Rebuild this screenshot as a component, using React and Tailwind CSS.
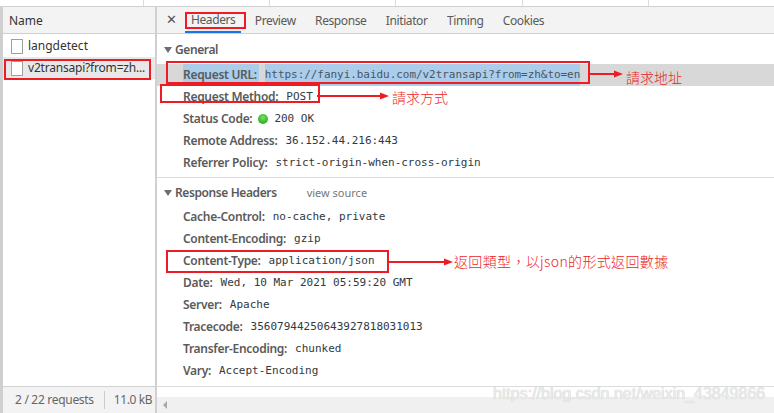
const sans = 'font-["Noto_Sans","Liberation_Sans",sans-serif]';
const mono = 'font-["DejaVu_Sans_Mono","Liberation_Mono",monospace]';
const cjk = 'font-["Noto_Sans_CJK_TC","Noto_Sans_CJK_SC",sans-serif]';

const general = [
  { name: 'Request Method:', value: 'POST' },
  { name: 'Status Code:', value: '200 OK', dot: true },
  { name: 'Remote Address:', value: '36.152.44.216:443' },
  { name: 'Referrer Policy:', value: 'strict-origin-when-cross-origin' },
];

const response = [
  { name: 'Cache-Control:', value: 'no-cache, private' },
  { name: 'Content-Encoding:', value: 'gzip' },
  { name: 'Content-Type:', value: 'application/json' },
  { name: 'Date:', value: 'Wed, 10 Mar 2021 05:59:20 GMT' },
  { name: 'Server:', value: 'Apache' },
  { name: 'Tracecode:', value: '35607944250643927818031013' },
  { name: 'Transfer-Encoding:', value: 'chunked' },
  { name: 'Vary:', value: 'Accept-Encoding' },
];

const tabs = ['Headers', 'Preview', 'Response', 'Initiator', 'Timing', 'Cookies'];

const Row = ({ name, value, dot }) => (
  <div className="flex h-[22px] items-center whitespace-nowrap pl-[26px]">
    <span className="text-[12px] font-semibold tracking-[-0.3px] text-[#5a5a5a]">{name}</span>
    {dot && <span className="ml-[6px] h-[10px] w-[10px] rounded-full bg-[radial-gradient(circle_at_50%_35%,#7be05c,#0f9d12)]" />}
    <span className={`${dot ? 'ml-[6px]' : 'ml-[8px]'} text-[11px] text-[#303942] ${mono}`}>{value}</span>
  </div>
);

const Section = ({ title, extra, className = 'h-[22px]' }) => (
  <div className={`flex items-center pl-[7px] ${className}`}>
    <span className="mr-[3px] h-0 w-0 border-x-[4px] border-t-[6px] border-x-transparent border-t-[#6e6e6e]" />
    <span className="text-[12px] font-semibold tracking-[-0.4px] text-[#5a5a5a]">{title}</span>
    {extra && <span className="ml-[30px] text-[11px] text-[#777]">{extra}</span>}
  </div>
);

const FileIcon = () => <span className="h-[15px] w-[12px] shrink-0 border border-[#a0a0a0] bg-white" />;

const Arrow = ({ className, width }) => (
  <svg className={`absolute ${className}`} width={width} height="10" viewBox={`0 0 ${width} 10`}>
    <path d={`M0 5H${width - 8}`} stroke="#ed1c24" strokeWidth="2" />
    <path d={`M${width - 9} 1.5L${width} 5L${width - 9} 8.5Z`} fill="#ed1c24" />
  </svg>
);

const Note = ({ className, children }) => (
  <span className={`absolute whitespace-nowrap text-[14px] font-light leading-none text-[#ed1c24] ${cjk} ${className}`}>{children}</span>
);

const Box = ({ className }) => <div className={`absolute border-2 border-[#ed1c24] ${className}`} />;

export default function App() {
  return (
    <div className={`relative flex h-[413px] w-[774px] flex-col overflow-hidden bg-white ${sans}`}>
      {/* waterfall header remains */}
      <div className="flex h-[7px] shrink-0 border-b border-[#d0d0d0] pl-[143px]">
        {[0, 1, 2, 3, 4].map((i) => (
          <div key={i} className="h-full w-[140px] border-l border-[#dcdcdc]" />
        ))}
      </div>

      <div className="flex min-h-0 flex-1">
        {/* request list */}
        <div className="flex w-[157px] shrink-0 flex-col border-x-[3px] border-l-[#cfcfcf] border-r-[#d0d0d0] [border-right-width:2px]">
          <div className="flex h-[27px] items-center border-b border-[#d0d0d0] bg-[#f3f3f3] pl-[6px] pt-[2px] text-[12px] text-[#333]">Name</div>
          <div className="mt-[1px] flex h-[22px] items-center gap-[5px] pl-[8px] text-[12px] text-[#333]">
            <FileIcon />
            langdetect
          </div>
          <div className="flex h-[22px] items-center gap-[5px] bg-[#e8e8e8] pl-[8px] text-[12px] text-[#333]">
            <FileIcon />
            <span className="w-[118px] truncate tracking-[-0.2px]">v2transapi?from=zh...</span>
          </div>
          <div className="flex-1" />
          <div className="flex h-[27px] items-center whitespace-nowrap border-t border-[#d0d0d0] bg-[#f3f3f3] pl-[12px] text-[12px] tracking-[-0.3px] text-[#666]">
            <span className="border-r border-[#ccc] pr-[10px]">2 / 22 requests</span>
            <span className="pl-[9px] tracking-[-0.4px]">11.0 kB</span>
          </div>
        </div>

        {/* details */}
        <div className="flex min-w-0 flex-1 flex-col">
          <div className="flex h-[27px] shrink-0 items-center border-b border-[#d0d0d0] bg-[#f3f3f3]">
            <span className="ml-[9px] w-[19px] text-[13px] text-[#555]">✕</span>
            {tabs.map((t, i) => (
              <span key={t} className={`mr-[7.4px] flex h-full items-center px-[6px] pt-[1px] text-[12px] tracking-[-0.4px] text-[#5a5a5a] ${i === 0 ? 'border-b-2 border-[#1a73e8]' : ''}`}>
                {t}
              </span>
            ))}
          </div>

          <div className="flex flex-col pt-[5px]">
            <Section title="General" className="h-[25px] pb-[3px]" />
            <div className="flex h-[22px] items-center whitespace-nowrap bg-[#d8d8d8] pl-[26px]">
              <span className="flex h-full items-center bg-[#aacdec] pr-[2px] text-[12px] font-semibold tracking-[-0.3px] text-[#5a5a5a]">Request URL:</span>
              <span className={`ml-[6px] flex h-full items-center bg-[#aacdec] text-[11px] tracking-[-0.05px] text-[#4a5560] ${mono}`}>https://fanyi.baidu.com/v2transapi?from=zh&amp;to=en</span>
            </div>
            {general.map((r) => <Row key={r.name} {...r} />)}
          </div>

          <div className="mt-[3px] flex flex-col border-t border-[#dcdcdc] pt-[4px]">
            <Section title="Response Headers" extra="view source" />
            <div className="pt-[2px]">
              {response.map((r) => <Row key={r.name} {...r} />)}
            </div>
          </div>

          <div className="mt-[4px] min-h-0 flex-1 overflow-hidden border-t border-[#dcdcdc] pt-[5px]">
            <Section title="Request Headers" />
          </div>
          <div className="relative z-10 -mt-[16px] flex h-[16px] shrink-0 items-center bg-[#f0f0f0] pl-[6px]">
            <span className="h-0 w-0 border-y-[4px] border-r-[4px] border-y-transparent border-r-[#a8a8a8]" />
          </div>
        </div>
      </div>

      {/* annotations */}
      <Box className="left-[4px] top-[59px] h-[21px] w-[147px]" />
      <Box className="left-[185px] top-[12px] h-[17px] w-[61px]" />
      <Box className="left-[166px] top-[61px] h-[23px] w-[424px]" />
      <Box className="left-[160px] top-[84px] h-[19px] w-[160px]" />
      <Box className="left-[166px] top-[250px] h-[23px] w-[223px]" />
      <Arrow className="left-[590px] top-[69px]" width={33} />
      <Arrow className="left-[317px] top-[91px]" width={72} />
      <Arrow className="left-[389px] top-[257px]" width={64} />
      <Note className="left-[626px] top-[70px]">請求地址</Note>
      <Note className="left-[392px] top-[90px]">請求方式</Note>
      <Note className="left-[454px] top-[254px] tracking-[0.35px]">返回類型，以json的形式返回數據</Note>
      <span className="absolute left-[493px] top-[382px] z-20 whitespace-nowrap font-['Liberation_Sans',sans-serif] text-[16px] text-[#ececec] [text-shadow:0_0_1px_#bbb]">https://blog.csdn.net/weixin_43849866</span>
    </div>
  );
}
